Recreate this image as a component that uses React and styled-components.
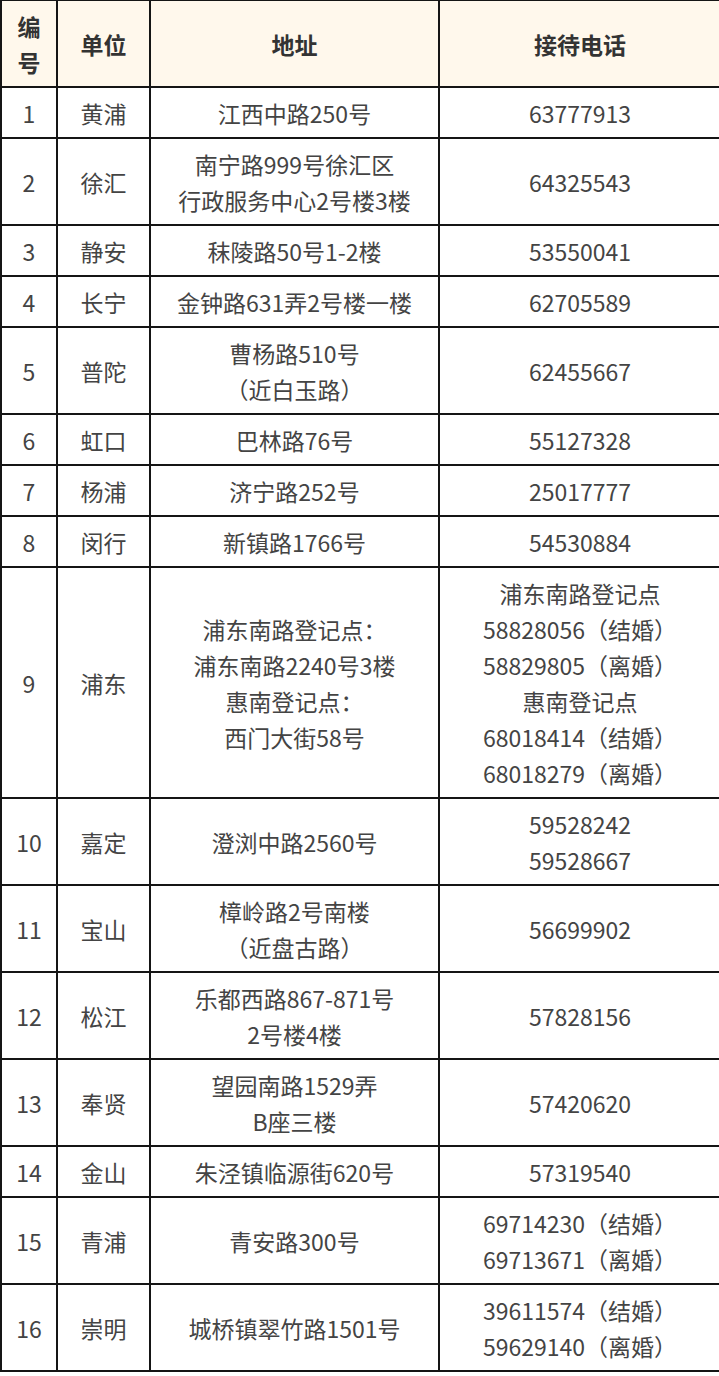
import React from 'react';
import styled, { createGlobalStyle } from 'styled-components';

const GlobalStyle = createGlobalStyle`
  html, body {
    margin: 0;
    padding: 0;
    background: #fff;
    overflow-x: hidden;
  }
  body {
    font-family: "Noto Sans CJK SC", "Noto Sans", sans-serif;
    color: #444;
  }
`;

const Wrapper = styled.div`
  width: 719px;
  overflow: hidden;
`;

const Table = styled.div`
  display: grid;
  grid-template-columns: 56px 93px 289px 282px;
  width: 722px;
  border-top: 1px solid #151515;
  border-left: 2px solid #151515;
`;

const Cell = styled.div`
  box-sizing: border-box;
  display: flex;
  flex-direction: column;
  align-items: center;
  justify-content: center;
  text-align: center;
  padding: 6.5px 0;
  font-size: 23px;
  line-height: 36px;
  border-right: 2px solid #151515;
  border-bottom: 2px solid #151515;
  background: ${props => (props.head ? '#fff8ec' : '#fff')};
  color: ${props => (props.head ? '#333' : '#444')};
  font-weight: ${props => (props.head ? 700 : 400)};
  white-space: nowrap;
`;

const rows = [
  ['1', '黄浦', ['江西中路250号'], ['63777913']],
  ['2', '徐汇', ['南宁路999号徐汇区', '行政服务中心2号楼3楼'], ['64325543']],
  ['3', '静安', ['秣陵路50号1-2楼'], ['53550041']],
  ['4', '长宁', ['金钟路631弄2号楼一楼'], ['62705589']],
  ['5', '普陀', ['曹杨路510号', '（近白玉路）'], ['62455667']],
  ['6', '虹口', ['巴林路76号'], ['55127328']],
  ['7', '杨浦', ['济宁路252号'], ['25017777']],
  ['8', '闵行', ['新镇路1766号'], ['54530884']],
  [
    '9',
    '浦东',
    ['浦东南路登记点：', '浦东南路2240号3楼', '惠南登记点：', '西门大街58号'],
    ['浦东南路登记点', '58828056（结婚）', '58829805（离婚）', '惠南登记点', '68018414（结婚）', '68018279（离婚）'],
  ],
  ['10', '嘉定', ['澄浏中路2560号'], ['59528242', '59528667']],
  ['11', '宝山', ['樟岭路2号南楼', '（近盘古路）'], ['56699902']],
  ['12', '松江', ['乐都西路867-871号', '2号楼4楼'], ['57828156']],
  ['13', '奉贤', ['望园南路1529弄', 'B座三楼'], ['57420620']],
  ['14', '金山', ['朱泾镇临源街620号'], ['57319540']],
  ['15', '青浦', ['青安路300号'], ['69714230（结婚）', '69713671（离婚）']],
  ['16', '崇明', ['城桥镇翠竹路1501号'], ['39611574（结婚）', '59629140（离婚）']],
];

const Lines = ({ items }) => items.map((t, i) => <span key={i}>{t}</span>);

export default function App() {
  return (
    <Wrapper>
      <GlobalStyle />
      <Table>
        <Cell head>
          <span>编</span>
          <span>号</span>
        </Cell>
        <Cell head>单位</Cell>
        <Cell head>地址</Cell>
        <Cell head>接待电话</Cell>
        {rows.map(([no, unit, addr, tel]) => (
          <React.Fragment key={no}>
            <Cell>{no}</Cell>
            <Cell>{unit}</Cell>
            <Cell><Lines items={addr} /></Cell>
            <Cell><Lines items={tel} /></Cell>
          </React.Fragment>
        ))}
      </Table>
    </Wrapper>
  );
}
